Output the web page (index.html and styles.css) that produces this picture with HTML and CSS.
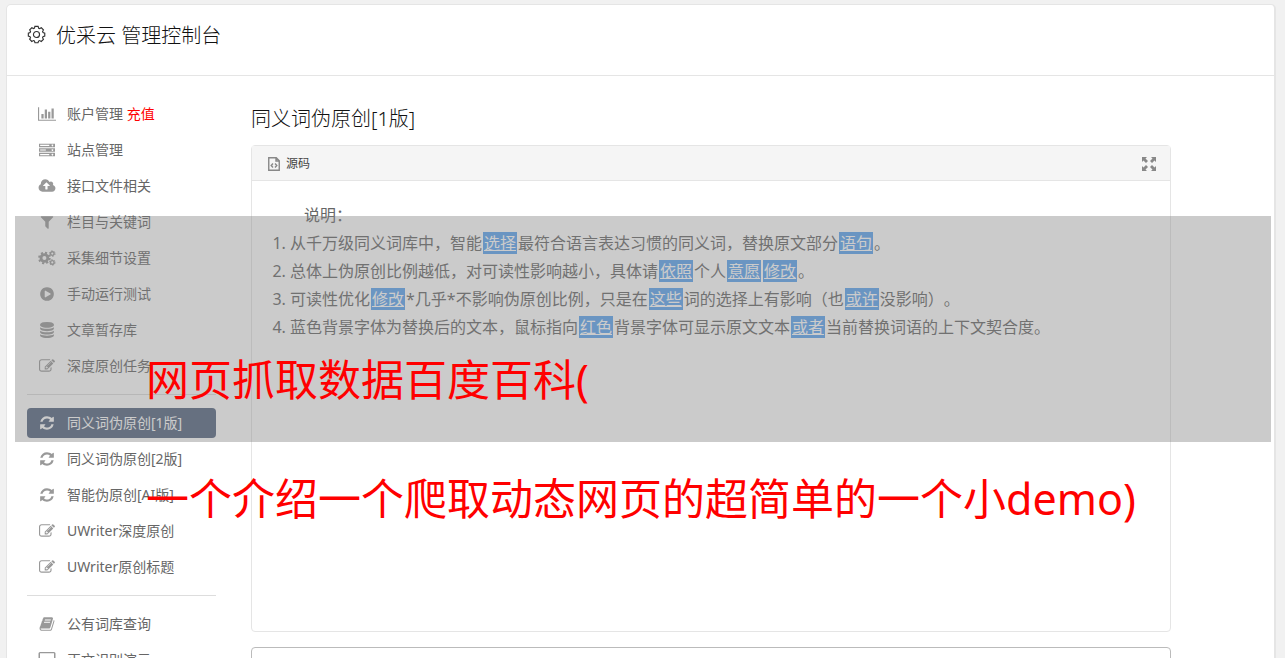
FILE: index.html
```html
<!DOCTYPE html>
<html lang="zh-CN">
<head>
  <meta charset="UTF-8" />
  <meta name="viewport" content="width=device-width, initial-scale=1" />
  <title>优采云 管理控制台</title>
  <link rel="stylesheet" href="styles.css">
</head>
<body>

  <svg class="sprite" aria-hidden="true">
    <symbol id="i-chart" viewBox="0 0 2048 1792"><path d="M640 896v512h-256v-512h256zm384-512v1024h-256v-1024h256zm1024 1152v128h-2048v-1536h128v1408h1920zm-640-896v768h-256v-768h256zm384-384v1152h-256v-1152h256z"/></symbol>
    <symbol id="i-server" viewBox="0 0 1792 1792"><path fill-rule="evenodd" d="M0 192h1792v384h-1792zM128 320v128h1024v-128zM1504 288a96 96 0 1 0 1 0zM0 704h1792v384h-1792zM128 832v128h640v-128zM1504 800a96 96 0 1 0 1 0zM0 1216h1792v384h-1792zM128 1344v128h1024v-128zM1504 1312a96 96 0 1 0 1 0z"/></symbol>
    <symbol id="i-cloud" viewBox="0 0 2048 1792"><path d="M1344 864q0-14-9-23l-352-352q-9-9-23-9t-23 9l-351 351q-10 12-10 24 0 14 9 23t23 9h224v352q0 13 9.5 22.5t22.5 9.5h192q13 0 22.5-9.5t9.5-22.5v-352h224q13 0 22.5-9.5t9.5-22.5zm640 288q0 159-112.5 271.5t-271.5 112.5h-1088q-185 0-316.5-131.5t-131.5-316.5q0-130 70-240t188-165q-2-30-2-43 0-212 150-362t362-150q156 0 285.5 87t188.5 231q71-62 166-62 106 0 181 75t75 181q0 76-41 138 130 31 213.5 135.5t83.5 238.5z"/></symbol>
    <symbol id="i-filter" viewBox="0 0 1792 1792"><path d="M1595 295q17 41-14 70l-493 493v742q0 42-39 59-13 5-25 5-27 0-45-19l-256-256q-19-19-19-45v-486l-493-493q-31-29-14-70 17-39 59-39h1280q42 0 59 39z"/></symbol>
    <symbol id="i-cogs" viewBox="0 0 18 16">
      <g fill="none" stroke="currentColor">
        <circle cx="6.4" cy="8" r="3.4" stroke-width="2.8"/>
        <circle cx="6.4" cy="8" r="5.3" stroke-width="2" stroke-dasharray="2.1 2.06"/>
        <circle cx="14.3" cy="3.6" r="1.8" stroke-width="1.4"/>
        <circle cx="14.3" cy="3.6" r="2.8" stroke-width="1" stroke-dasharray="1.4 1.53"/>
        <circle cx="14.3" cy="12.4" r="1.8" stroke-width="1.4"/>
        <circle cx="14.3" cy="12.4" r="2.8" stroke-width="1" stroke-dasharray="1.4 1.53"/>
      </g>
    </symbol>
    <symbol id="i-play" viewBox="0 0 1792 1792"><path d="M896 128q209 0 385.500 103t279.500 279.500 103 385.500-103 385.500-279.500 279.500-385.500 103-385.500-103-279.500-279.500-103-385.500 103-385.500 279.500-279.500 385.500-103zm384 823q32-18 32-55t-32-55l-544-320q-31-19-64-1-32 19-32 56v640q0 37 32 56 16 8 32 8 17 0 32-9z"/></symbol>
    <symbol id="i-database" viewBox="0 0 1792 1792"><path d="M896 768q237 0 443-43t325-127v170q0 69-103 128t-280 93.500-385 34.500-385-34.500-280-93.500-103-128v-170q119 84 325 127t443 43zm0 768q237 0 443-43t325-127v170q0 69-103 128t-280 93.500-385 34.500-385-34.500-280-93.500-103-128v-170q119 84 325 127t443 43zm0-384q237 0 443-43t325-127v170q0 69-103 128t-280 93.500-385 34.500-385-34.500-280-93.500-103-128v-170q119 84 325 127t443 43zm0-1152q208 0 385 34.500t280 93.500 103 128v128q0 69-103 128t-280 93.500-385 34.500-385-34.500-280-93.500-103-128v-128q0-69 103-128t280-93.500 385-34.500z"/></symbol>
    <symbol id="i-edit" viewBox="0 0 1792 1792"><path d="M888 1184l116-116-152-152-116 116v56h96v96h56zm440-720q-16-16-33 1l-350 350q-17 17-1 33t33-1l350-350q17-17 1-33zm80 594v190q0 119-84.500 203.500t-203.500 84.500h-832q-119 0-203.500-84.500t-84.500-203.500v-832q0-119 84.500-203.500t203.500-84.500h832q63 0 117 25 15 7 18 23 3 17-9 29l-49 49q-14 14-32 8-23-6-45-6h-832q-66 0-113 47t-47 113v832q0 66 47 113t113 47h832q66 0 113-47t47-113v-126q0-13 9-22l64-64q15-15 35-7t20 29zm-96-738l288 288-672 672h-288v-288zm444 132l-92 92-288-288 92-92q28-28 68-28t68 28l152 152q28 28 28 68t-28 68z"/></symbol>
    <symbol id="i-refresh" viewBox="0 0 1792 1792"><path d="M1639 1056q0 5-1 7-64 268-268 434.500t-478 166.500q-146 0-282.500-55t-243.500-157l-129 129q-19 19-45 19t-45-19-19-45v-448q0-26 19-45t45-19h448q26 0 45 19t19 45-19 45l-137 137q71 66 161 102t187 36q134 0 250-65t186-179q11-17 53-117 8-23 30-23h192q13 0 22.500 9.500t9.500 22.500zm25-800v448q0 26-19 45t-45 19h-448q-26 0-45-19t-19-45 19-45l138-138q-148-137-349-137-134 0-250 65t-186 179q-11 17-53 117-8 23-30 23h-199q-13 0-22.500-9.500t-9.500-22.500v-7q65-268 270-434.500t480-166.500q146 0 284 55.500t245 156.500l130-129q19-19 45-19t45 19 19 45z"/></symbol>
    <symbol id="i-book" viewBox="0 0 1792 1792"><path d="M1703 478q40 57 18 129l-275 906q-19 64-76.500 107.500t-122.500 43.500h-923q-77 0-148.500-53.500t-99.500-131.500q-24-67-2-127 0-4 3-27t4-37q1-8-3-21.500t-3-19.500q2-11 8-21t16.500-23.500 16.500-23.500q23-38 45-91.500t30-91.500q3-10 .5-30t-.5-28q3-11 17-28t17-23q21-36 42-92t25-90q1-9-2.500-32t.5-28q4-13 22-30.500t22-22.500q19-26 42.500-84.500t27.500-96.500q1-8-3-25.500t-2-26.500q2-8 9-18t18-23 17-21q8-12 16.500-30.500t15-35 16-36 19.500-32 26.500-23.500 36-11.500 47.500 5.500l-1 3q38-9 51-9h761q74 0 114 56t18 130l-274 906q-36 119-71.500 153.500t-128.500 34.500h-869q-27 0-38 15-11 16-1 43 24 70 144 70h923q29 0 56-15.500t35-41.500l300-987q7-22 5-57 38 15 59 43zm-1064 2q-4 13 2 22.500t20 9.500h608q13 0 25.500-9.500t16.500-22.500l21-64q4-13-2-22.500t-20-9.500h-608q-13 0-25.500 9.500t-16.500 22.500zm-83 256q-4 13 2 22.500t20 9.500h608q13 0 25.500-9.500t16.500-22.500l21-64q4-13-2-22.500t-20-9.500h-608q-13 0-25.500 9.500t-16.500 22.500z"/></symbol>
    <symbol id="i-screen" viewBox="0 0 18 16"><path fill-rule="evenodd" d="M2 0h14a1.500 1.500 0 0 1 1.500 1.500v9a1.500 1.500 0 0 1-1.500 1.500h-5v2h2v1h-8v-1h2v-2h-5a1.500 1.500 0 0 1-1.500-1.500v-9a1.500 1.500 0 0 1 1.500-1.500zM2 1.300v9.400h14v-9.400z"/></symbol>
  </svg>

  <div class="page">
    <header class="page-header">
      <svg class="gear" viewBox="0 0 20 20" aria-hidden="true">
        <path d="M8.300 1.500h3.400l.6 1.900 1 .4 1.800-.9 2.200 2.300-.9 1.700.5 1.100 1.800.6v3l-1.900.7-.4 1 .9 1.800-2.300 2.200-1.700-.9-1.100.5-.6 1.800h-3.200l-.6-1.900-1-.4-1.800.9-2.200-2.300.9-1.700-.5-1.100-1.800-.6v-3l1.900-.7.4-1-.9-1.800 2.300-2.200 1.700.9 1.100-.5z"/>
        <circle cx="10" cy="10" r="3.200"/>
      </svg>
      <h1>优采云 管理控制台</h1>
    </header>

    <div class="layout">
      <nav class="sidebar">
        <a href="#"><svg class="icon"><use href="#i-chart"/></svg><span>账户管理 <em>充值</em></span></a>
        <a href="#"><svg class="icon"><use href="#i-server"/></svg>站点管理</a>
        <a href="#"><svg class="icon"><use href="#i-cloud"/></svg>接口文件相关</a>
        <a href="#"><svg class="icon"><use href="#i-filter"/></svg>栏目与关键词</a>
        <a href="#"><svg class="icon"><use href="#i-cogs"/></svg>采集细节设置</a>
        <a href="#"><svg class="icon"><use href="#i-play"/></svg>手动运行测试</a>
        <a href="#"><svg class="icon"><use href="#i-database"/></svg>文章暂存库</a>
        <a href="#"><svg class="icon"><use href="#i-edit"/></svg>深度原创任务</a>
        <hr>
        <a href="#" class="active"><svg class="icon"><use href="#i-refresh"/></svg>同义词伪原创[1版]</a>
        <a href="#"><svg class="icon"><use href="#i-refresh"/></svg>同义词伪原创[2版]</a>
        <a href="#"><svg class="icon"><use href="#i-refresh"/></svg>智能伪原创[AI版]</a>
        <a href="#"><svg class="icon"><use href="#i-edit"/></svg>UWriter深度原创</a>
        <a href="#"><svg class="icon"><use href="#i-edit"/></svg>UWriter原创标题</a>
        <hr>
        <a href="#"><svg class="icon"><use href="#i-book"/></svg>公有词库查询</a>
        <a href="#"><svg class="icon"><use href="#i-screen"/></svg>正文识别演示</a>
      </nav>

      <main class="content">
        <h2>同义词伪原创[1版]</h2>

        <section class="editor">
          <div class="toolbar">
            <button type="button" class="source">
              <svg viewBox="0 0 12 14" aria-hidden="true"><path d="M.75.750h7.500l3 3v9.500H.750zM8 1v3h3M5 6.500 3.200 8.500 5 10.500M7 6.500l1.800 2L7 10.500"/></svg>
              源码
            </button>
            <button type="button" class="expand" aria-label="全屏">
              <svg viewBox="0 0 14 14" aria-hidden="true"><path d="M0 0h5L3.500 1.500 6 4 4 6 1.500 3.500 0 5zM14 0v5l-1.500-1.500L10 6 8 4l2.500-2.500L9 0zM0 14V9l1.500 1.500L4 8l2 2-2.500 2.500L5 14zM14 14H9l1.500-1.500L8 10l2-2 2.500 2.500L14 9z"/></svg>
            </button>
          </div>
          <div class="editor-body">
            <p>说明：</p>
            <ol>
              <li>从千万级同义词库中，智能<a href="#">选择</a>最符合语言表达习惯的同义词，替换原文部分<a href="#">语句</a>。</li>
              <li>总体上伪原创比例越低，对可读性影响越小，具体请<a href="#">依照</a>个人<a href="#">意愿</a><a href="#">修改</a>。</li>
              <li>可读性优化<a href="#">修改</a>*几乎*不影响伪原创比例，只是在<a href="#">这些</a>词的选择上有影响（也<a href="#">或许</a>没影响）。</li>
              <li>蓝色背景字体为替换后的文本，鼠标指向<a href="#">红色</a>背景字体可显示原文文本<a href="#">或者</a>当前替换词语的上下文契合度。</li>
            </ol>
          </div>
        </section>

        <textarea class="result" aria-label="结果"></textarea>
      </main>
    </div>
  </div>

  <div class="banner">
    <div class="banner-text">网页抓取数据百度百科(</div>
    <div class="banner-text">一个介绍一个爬取动态网页的超简单的一个小demo)</div>
  </div>

</body>
</html>
```
FILE: styles.css
```css
* {
  box-sizing: border-box;
}

body {
  margin: 0;
  height: 100vh;
  overflow: hidden;
  position: relative;
  padding: 4px 9px 0 6px;
  background: #f1f1f1;
  font-family: "Noto Sans", "Noto Sans CJK SC", sans-serif;
  font-size: 14px;
  color: #666;
  text-spacing-trim: space-all;
}

.sprite {
  display: none;
}

.page {
  background: #fff;
  border: 1px solid #e5e5e5;
  border-right-width: 2px;
  border-radius: 5px;
}

.page-header {
  display: flex;
  align-items: center;
  gap: 10px;
  height: 71px;
  padding: 0 20px 8px;
  border-bottom: 1px solid #e5e5e5;
}

.gear {
  width: 19px;
  height: 19px;
  margin-bottom: 3px;
  fill: none;
  stroke: #333;
  stroke-width: 1.2;
}

h1, h2 {
  margin: 0;
  font-size: 20px;
  line-height: 28px;
  font-weight: 300;
  color: #111;
}

.layout {
  display: flex;
  gap: 35px;
  padding: 23px 103px 0 20px;
}

.sidebar {
  flex: 0 0 189px;
  display: flex;
  flex-direction: column;
  gap: 6px;
}

.sidebar a {
  display: flex;
  align-items: center;
  gap: 11px;
  height: 30px;
  padding: 0 11px 2px;
  border-radius: 4px;
  color: #666;
  text-decoration: none;
  white-space: nowrap;
}

.sidebar em {
  color: #f00;
  font-style: normal;
}

.sidebar hr {
  width: 100%;
  margin: 7px 0;
  border: 0;
  border-top: 1px solid #ddd;
}

.icon {
  width: 18px;
  height: 16px;
  margin-top: 2px;
  fill: currentColor;
  color: #999;
}

.sidebar .active {
  background: #546580;
  color: #fff;
}

.active .icon {
  color: #fff;
}

.content {
  flex: 1;
  min-width: 0;
}

h2 {
  margin: 6px 0 12px;
}

.editor {
  border: 1px solid #e5e5e5;
  border-radius: 4px;
}

.toolbar {
  display: flex;
  justify-content: space-between;
  align-items: center;
  height: 35px;
  padding: 0 14px 0 16px;
  background: #f5f5f5;
  border-bottom: 1px solid #e5e5e5;
}

.toolbar button {
  display: flex;
  align-items: center;
  gap: 6px;
  padding: 0;
  border: 0;
  background: none;
  font: inherit;
  font-size: 12px;
  color: #444;
}

.toolbar svg {
  margin-top: 2px;
}

.source svg {
  width: 12px;
  height: 14px;
  fill: none;
  stroke: #888;
  stroke-width: 1.4;
}

.expand svg {
  width: 14px;
  height: 14px;
  fill: #888;
}

.editor-body {
  min-height: 450px;
  padding: 20px;
  font-size: 16px;
  line-height: 28px;
}

.editor-body p {
  margin: 0;
  text-indent: 2em;
}

.editor-body ol {
  margin: 0;
  padding-left: 18px;
}

.editor-body a {
  margin: 0 1px;
  padding: 0 1px;
  background: #5ba3f0;
  color: #fff;
}

.result {
  display: block;
  width: 100%;
  height: 200px;
  margin-top: 15px;
  border: 1px solid #bbb;
  border-radius: 4px;
  resize: none;
}

/* translucent strip with the headline, lies over the whole page */
.banner {
  position: absolute;
  top: 216px;
  left: 15px;
  right: 14px;
  height: 226px;
  padding: 104px 0 0 131px;
  background: rgba(128, 128, 128, 0.41);
  pointer-events: none;
}

.banner-text {
  font-size: 43px;
  line-height: 119px;
  color: #f00;
  white-space: nowrap;
}
```
